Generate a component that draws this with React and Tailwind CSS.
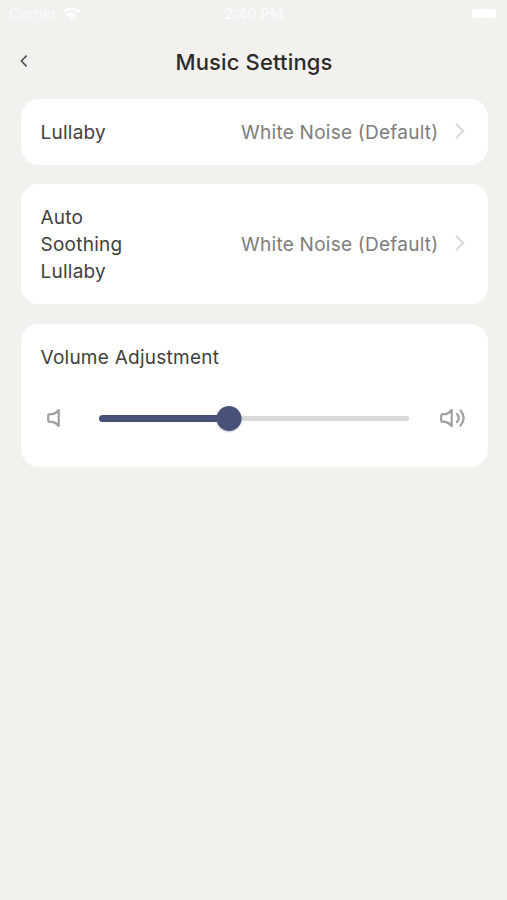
import { useState } from "react";

const Chevron = () => (
  <svg width="10" height="16" viewBox="0 0 10 16" fill="none" stroke="#d8d8d8" strokeWidth="1.9">
    <path d="M1 0.8L8.3 8L1 15.2" />
  </svg>
);

const Speaker = ({ loud }) => (
  <svg width="28" height="22" viewBox="0 0 28 22" fill="none" stroke="#a0a0a0" strokeWidth="2.2" strokeLinejoin="round" strokeLinecap="round">
    <path d="M2.2 9Q2.2 7.2 4 7.2H6.2Q9.6 6.8 12.7 3V19Q9.6 15.2 6.2 14.8H4Q2.2 14.8 2.2 13Z" />
    {loud && <path d="M18 6.9Q21.6 11 18 15.1M21.5 3.4Q27.8 11 21.5 18.6" />}
  </svg>
);

const StatusBar = () => (
  <div className="grid h-7 grid-cols-3 items-center pr-[11px] pl-[9px] text-[15px] text-[#fbfbfa]">
    <div className="flex items-center gap-[5px]">
      <span className="w-[48px] text-[14.5px]">Carrier</span>
      <svg width="19" height="15" viewBox="0 0 19 15" fill="none" stroke="#fdfdfc" strokeWidth="3">
        <path d="M1.4 5.3Q9.5 -1.8 17.6 5.3M4.7 8.9Q9.5 4.8 14.3 8.9" />
        <path d="M6.9 11Q9.5 9 12.1 11L9.5 14Z" fill="#fdfdfc" stroke="none" />
      </svg>
    </div>
    <span className="pl-[3px] text-center text-[14.5px] font-medium">2:40 PM</span>
    <div className="h-[9px] w-[24px] -translate-y-px justify-self-end rounded-[3px] bg-white"></div>
  </div>
);

const SettingRow = ({ label, value, className }) => (
  <button className={`flex w-full items-center rounded-[18px] bg-white pr-[23px] pl-5 text-left ${className}`}>
    <span className="w-[100px] pt-px text-[#414141]">{label}</span>
    <span className="ml-auto pt-px whitespace-nowrap text-[#7d7d7d]">{value}</span>
    <span className="ml-4 -translate-y-px">
      <Chevron />
    </span>
  </button>
);

const App = () => {
  const [volume] = useState(42);

  return (
    <div className="h-[900px] w-[507px] overflow-hidden bg-[#f3f1ee] font-['Inter',sans-serif]">
      <StatusBar />

      {/* Header */}
      <header className="grid h-[71px] grid-cols-[60px_1fr_60px] items-center pb-[2px]">
        <button className="pb-[3px] pl-[20px]" aria-label="Back">
          <svg width="8" height="14" viewBox="0 0 8 14" fill="none" stroke="#555555" strokeWidth="1.7">
            <path d="M6.6 1.7L1.4 7L6.6 12.3" />
          </svg>
        </button>
        <h1 className="pl-px text-center text-[22px] font-medium tracking-[0.15px] text-[#2b2b2b]">Music Settings</h1>
      </header>

      <main className="flex flex-col gap-[19.5px] pr-[19.5px] pl-[20.5px] text-[19px] leading-[27px] tracking-[0.25px]">
        <SettingRow label="Lullaby" value="White Noise (Default)" className="h-[65.5px]" />
        <SettingRow label="Auto Soothing Lullaby" value="White Noise (Default)" className="h-[120px]" />

        {/* Volume */}
        <section className="h-[143.5px] rounded-[18px] bg-white px-5 pt-5">
          <h2 className="text-[#414141]">Volume Adjustment</h2>
          <div className="mt-[34.5px] flex h-[26px] items-center pl-[5px]">
            <Speaker />
            <div className="relative ml-[25px] flex h-[25px] w-[310.5px] items-center">
              <div className="h-[5px] w-full rounded-full bg-[#d9d9d9]"></div>
              <div className="absolute left-0 h-[7px] rounded-full bg-[#485278]" style={{ width: `${volume}%` }}></div>
              <div
                className="absolute size-[25px] -translate-x-1/2 rounded-full bg-[#485278] shadow-[0_1px_2px_rgba(72,82,120,0.35)]"
                style={{ left: `${volume}%` }}
              ></div>
            </div>
            <div className="ml-[30px]">
              <Speaker loud />
            </div>
          </div>
        </section>
      </main>
    </div>
  );
};

export default App;
